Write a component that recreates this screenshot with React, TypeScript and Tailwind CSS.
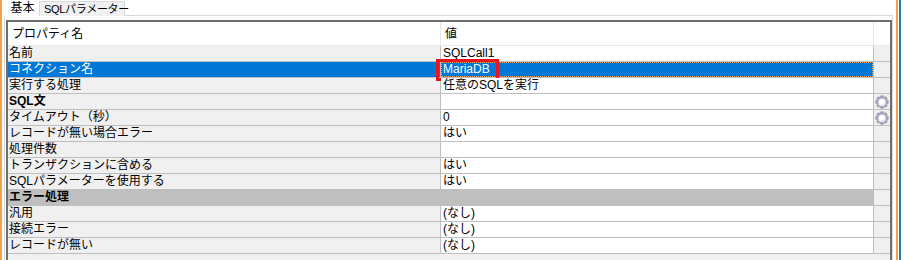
import React from "react";

type Row = {
  name: string;
  value?: string;
  bold?: boolean;
  category?: boolean;
  selected?: boolean;
  icon?: boolean;
};

const rows: Row[] = [
  { name: "名前", value: "SQLCall1" },
  { name: "コネクション名", value: "MariaDB", selected: true },
  { name: "実行する処理", value: "任意のSQLを実行" },
  { name: "SQL文", value: "", bold: true, icon: true },
  { name: "タイムアウト（秒）", value: "0", icon: true },
  { name: "レコードが無い場合エラー", value: "はい" },
  { name: "処理件数", value: "" },
  { name: "トランザクションに含める", value: "はい" },
  { name: "SQLパラメーターを使用する", value: "はい" },
  { name: "エラー処理", category: true, bold: true },
  { name: "汎用", value: "(なし)" },
  { name: "接続エラー", value: "(なし)" },
  { name: "レコードが無い", value: "(なし)" },
];

function Gear() {
  const teeth = Array.from({ length: 8 }, (_, i) => i * 45);
  return (
    <svg width="14" height="14" viewBox="0 0 14 14">
      {teeth.map((a) => (
        <rect
          key={a}
          x="5.3"
          y="0.3"
          width="3.4"
          height="3.2"
          rx="0.8"
          fill="#a4a4b8"
          transform={`rotate(${a} 7 7)`}
        />
      ))}
      <circle cx="7" cy="7" r="5.4" fill="#b4b4c8" stroke="#9494a8" strokeWidth="0.8" />
      <circle cx="7" cy="7.4" r="3.7" fill="#e8e8f4" />
      <circle cx="7" cy="6.7" r="2.7" fill="#ffffff" />
    </svg>
  );
}

export default function App() {
  return (
    <div
      className="relative flex h-[260px] w-[905px] overflow-hidden bg-white text-[12px] text-black"
      style={{ fontFamily: '"Liberation Sans", "Noto Sans CJK JP", sans-serif' }}
    >
      {/* left accent */}
      <div className="h-full w-[2px] bg-[#f4a04c]" />
      <div className="h-full w-[2px]" />

      {/* main panel */}
      <div className="flex h-full w-[889px] flex-col">
        {/* tabs */}
        <div className="flex h-[16px] items-end">
          <div className="flex h-[16px] w-[35px] items-center justify-center bg-white leading-[13px]">
            <span className="pl-[2px]">基本</span>
          </div>
          <div className="flex h-[15px] w-[86px] items-center whitespace-nowrap border border-b-0 border-[#d9d9d9] bg-[#f0f0f0] pl-[4px] text-[11px] leading-[13px] tracking-[-0.3px]">
            SQLパラメーター
          </div>
          <div className="h-[1px] flex-1 self-end bg-[#d9d9d9]" />
        </div>

        {/* tab page */}
        <div className="flex flex-1 border-l border-r border-[#d9d9d9] pl-[1px] pr-[1px] pt-[4px]">
          <div className="flex flex-1 flex-col border-l-2 border-r-2 border-t-2 border-[#6e6e6e]">
            {/* header */}
            <div className="flex h-[24px] border-b border-[#e8e8e8] bg-white">
              <div className="flex w-[433px] items-center border-r border-[#e8e8e8] pl-[4px]">
                プロパティ名
              </div>
              <div className="flex w-[433px] items-center border-r border-[#e8e8e8] pl-[4px]">
                値
              </div>
              <div className="w-[16px]" />
            </div>

            {rows.map((r) => (
              <div key={r.name} className="flex h-[16px] border-b border-[#bfbfbf] leading-[15px]">
                <div
                  className={`w-[433px] whitespace-nowrap border-r border-[#bfbfbf] pl-[1px] ${
                    r.selected
                      ? "bg-[#0078d7] text-white"
                      : r.category
                      ? "bg-[#bfbfbf] font-bold"
                      : "bg-[#f0f0f0]"
                  } ${r.bold ? "font-bold" : ""}`}
                >
                  {r.name}
                </div>
                <div
                  className={`relative w-[433px] whitespace-nowrap border-r border-[#bfbfbf] ${
                    r.selected
                      ? "bg-[#0078d7] text-white"
                      : r.category
                      ? "bg-[#bfbfbf]"
                      : "bg-white"
                  }`}
                >
                  {r.selected ? (
                    <>
                      <div className="h-full w-full border border-dotted border-[#f0a050] pl-[1px] leading-[13px]">
                        {r.value}
                      </div>
                      <div className="absolute left-[-5px] top-[-3px] h-[22px] w-[63px] border-[3px] border-[#e8141e]" />
                    </>
                  ) : (
                    <div className="pl-[2px]">{r.value}</div>
                  )}
                </div>
                <div className="flex w-[16px] items-center justify-center bg-[#f0f0f0]">
                  {r.icon ? <Gear /> : null}
                </div>
              </div>
            ))}
            <div className="flex-1 bg-[#f0f0f0]" />
          </div>
        </div>
      </div>

      {/* right accents */}
      <div className="h-full w-[3px]" />
      <div className="h-full w-[2px] bg-[#f4a04c]" />
      <div className="h-full w-[1px]" />
      <div className="h-full w-[2px] bg-[#2b7bb0]" />
      <div className="h-full flex-1" />
    </div>
  );
}
